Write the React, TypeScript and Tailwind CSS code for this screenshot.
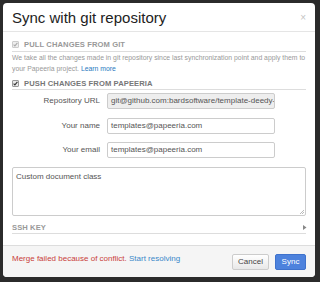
import React from 'react';

const font = { fontFamily: '"Liberation Sans", Arial, sans-serif' };

const Check = ({ disabled }: { disabled?: boolean }) => (
  <span
    className={`flex items-center justify-center w-[7px] h-[7px] rounded-[1px] border ${
      disabled ? 'border-[#ccc] bg-[#eee]' : 'border-[#999] bg-[#e8e8e8]'
    }`}
  >
    <svg width="5" height="5" viewBox="0 0 5 5">
      <path
        d="M0.6 2.6 L1.9 3.9 L4.4 0.9"
        fill="none"
        stroke={disabled ? '#aaa' : '#333'}
        strokeWidth="1.1"
      />
    </svg>
  </span>
);

const Field = ({ label, value, readOnly, className }: { label: string; value: string; readOnly?: boolean; className?: string }) => (
  <div className={`flex items-center ${className ?? ''}`}>
    <label className="w-[95px] pr-[7px] text-right text-[8px] text-[#555]">{label}</label>
    <div
      className={`w-[168px] h-[16px] flex items-center px-[3px] rounded-[2px] border text-[8px] text-[#555] overflow-hidden whitespace-nowrap ${
        readOnly ? 'bg-[#eee] border-[#ccc]' : 'bg-white border-[#ccc]'
      }`}
    >
      {value}
    </div>
  </div>
);

export default function App() {
  return (
    <div className="w-[320px] h-[282px] bg-[#2b2b2b] pt-[3px] pl-[3px] pr-[5px] pb-[5px]" style={font}>
      <div className="h-[274px] bg-white rounded-[4px] flex flex-col overflow-hidden">
        {/* Header */}
        <div className="h-[29px] border-b border-[#e5e5e5] flex items-center justify-between pl-[9px] pr-[9px] pt-[1px]">
          <h3 className="text-[15px] leading-[15px] text-[#222]">Sync with git repository</h3>
          <span className="text-[10px] leading-[10px] text-[#c4c4c4]">×</span>
        </div>

        {/* Body */}
        <div className="flex-1 flex flex-col px-[9px]">
          <div className="mt-[6px] h-[14px] flex items-center gap-[5px] border-b border-[#ddd]">
            <Check disabled />
            <span className="text-[7.6px] font-bold text-[#999] tracking-[0.1px]">PULL CHANGES FROM GIT</span>
          </div>
          <p className="text-[6.85px] leading-[11px] text-[#999]">
            We take all the changes made in git repository since last synchronization point and apply them to your Papeeria project.{' '}
            <span className="text-[#2a7ac0]">Learn more</span>
          </p>

          <div className="mt-[4px] h-[12px] flex items-center gap-[5px] border-b border-[#ddd]">
            <Check />
            <span className="text-[7.6px] font-bold text-[#777] tracking-[0.1px]">PUSH CHANGES FROM PAPEERIA</span>
          </div>

          <Field className="mt-[3px]" label="Repository URL" value="git@github.com:bardsoftware/template-deedy-" readOnly />
          <Field className="mt-[9px]" label="Your name" value="templates@papeeria.com" />
          <Field className="mt-[8px]" label="Your email" value="templates@papeeria.com" />

          <div className="relative mt-[9px] h-[49px] rounded-[2px] border border-[#ccc] px-[3px] py-[3px] text-[8px] text-[#555]">
            Custom document class
            <svg className="absolute right-[1px] bottom-[1px]" width="5" height="5" viewBox="0 0 5 5">
              <path d="M1 5 L5 1 M3 5 L5 3" stroke="#aaa" strokeWidth="0.8" />
            </svg>
          </div>

          <div className="mt-[6px] h-[12px] flex items-center justify-between border-b border-[#ddd]">
            <span className="text-[7.6px] font-bold text-[#999] tracking-[0.1px]">SSH KEY</span>
            <svg width="4" height="5" viewBox="0 0 4 5" className="mr-[-1px]">
              <path d="M0 0 L3.5 2.5 L0 5 Z" fill="#888" />
            </svg>
          </div>
        </div>

        {/* Footer */}
        <div className="h-[32px] border-t border-[#ddd] bg-[#f5f5f5] flex items-center justify-between px-[9px]">
          <p className="text-[8px] text-[#c9403a] -mt-[5px]">
            Merge failed because of conflict. <span className="text-[#3a88c9]">Start resolving</span>
          </p>
          <div className="flex gap-[6px]">
            <button className="w-[37px] h-[16px] rounded-[2px] border border-[#ccc] bg-gradient-to-b from-white to-[#e8e8e8] text-[8px] text-[#444]">
              Cancel
            </button>
            <button className="w-[31px] h-[16px] rounded-[2px] border border-[#3f72cc] bg-[#4d82dd] text-[8px] text-white">
              Sync
            </button>
          </div>
        </div>
      </div>
    </div>
  );
}
